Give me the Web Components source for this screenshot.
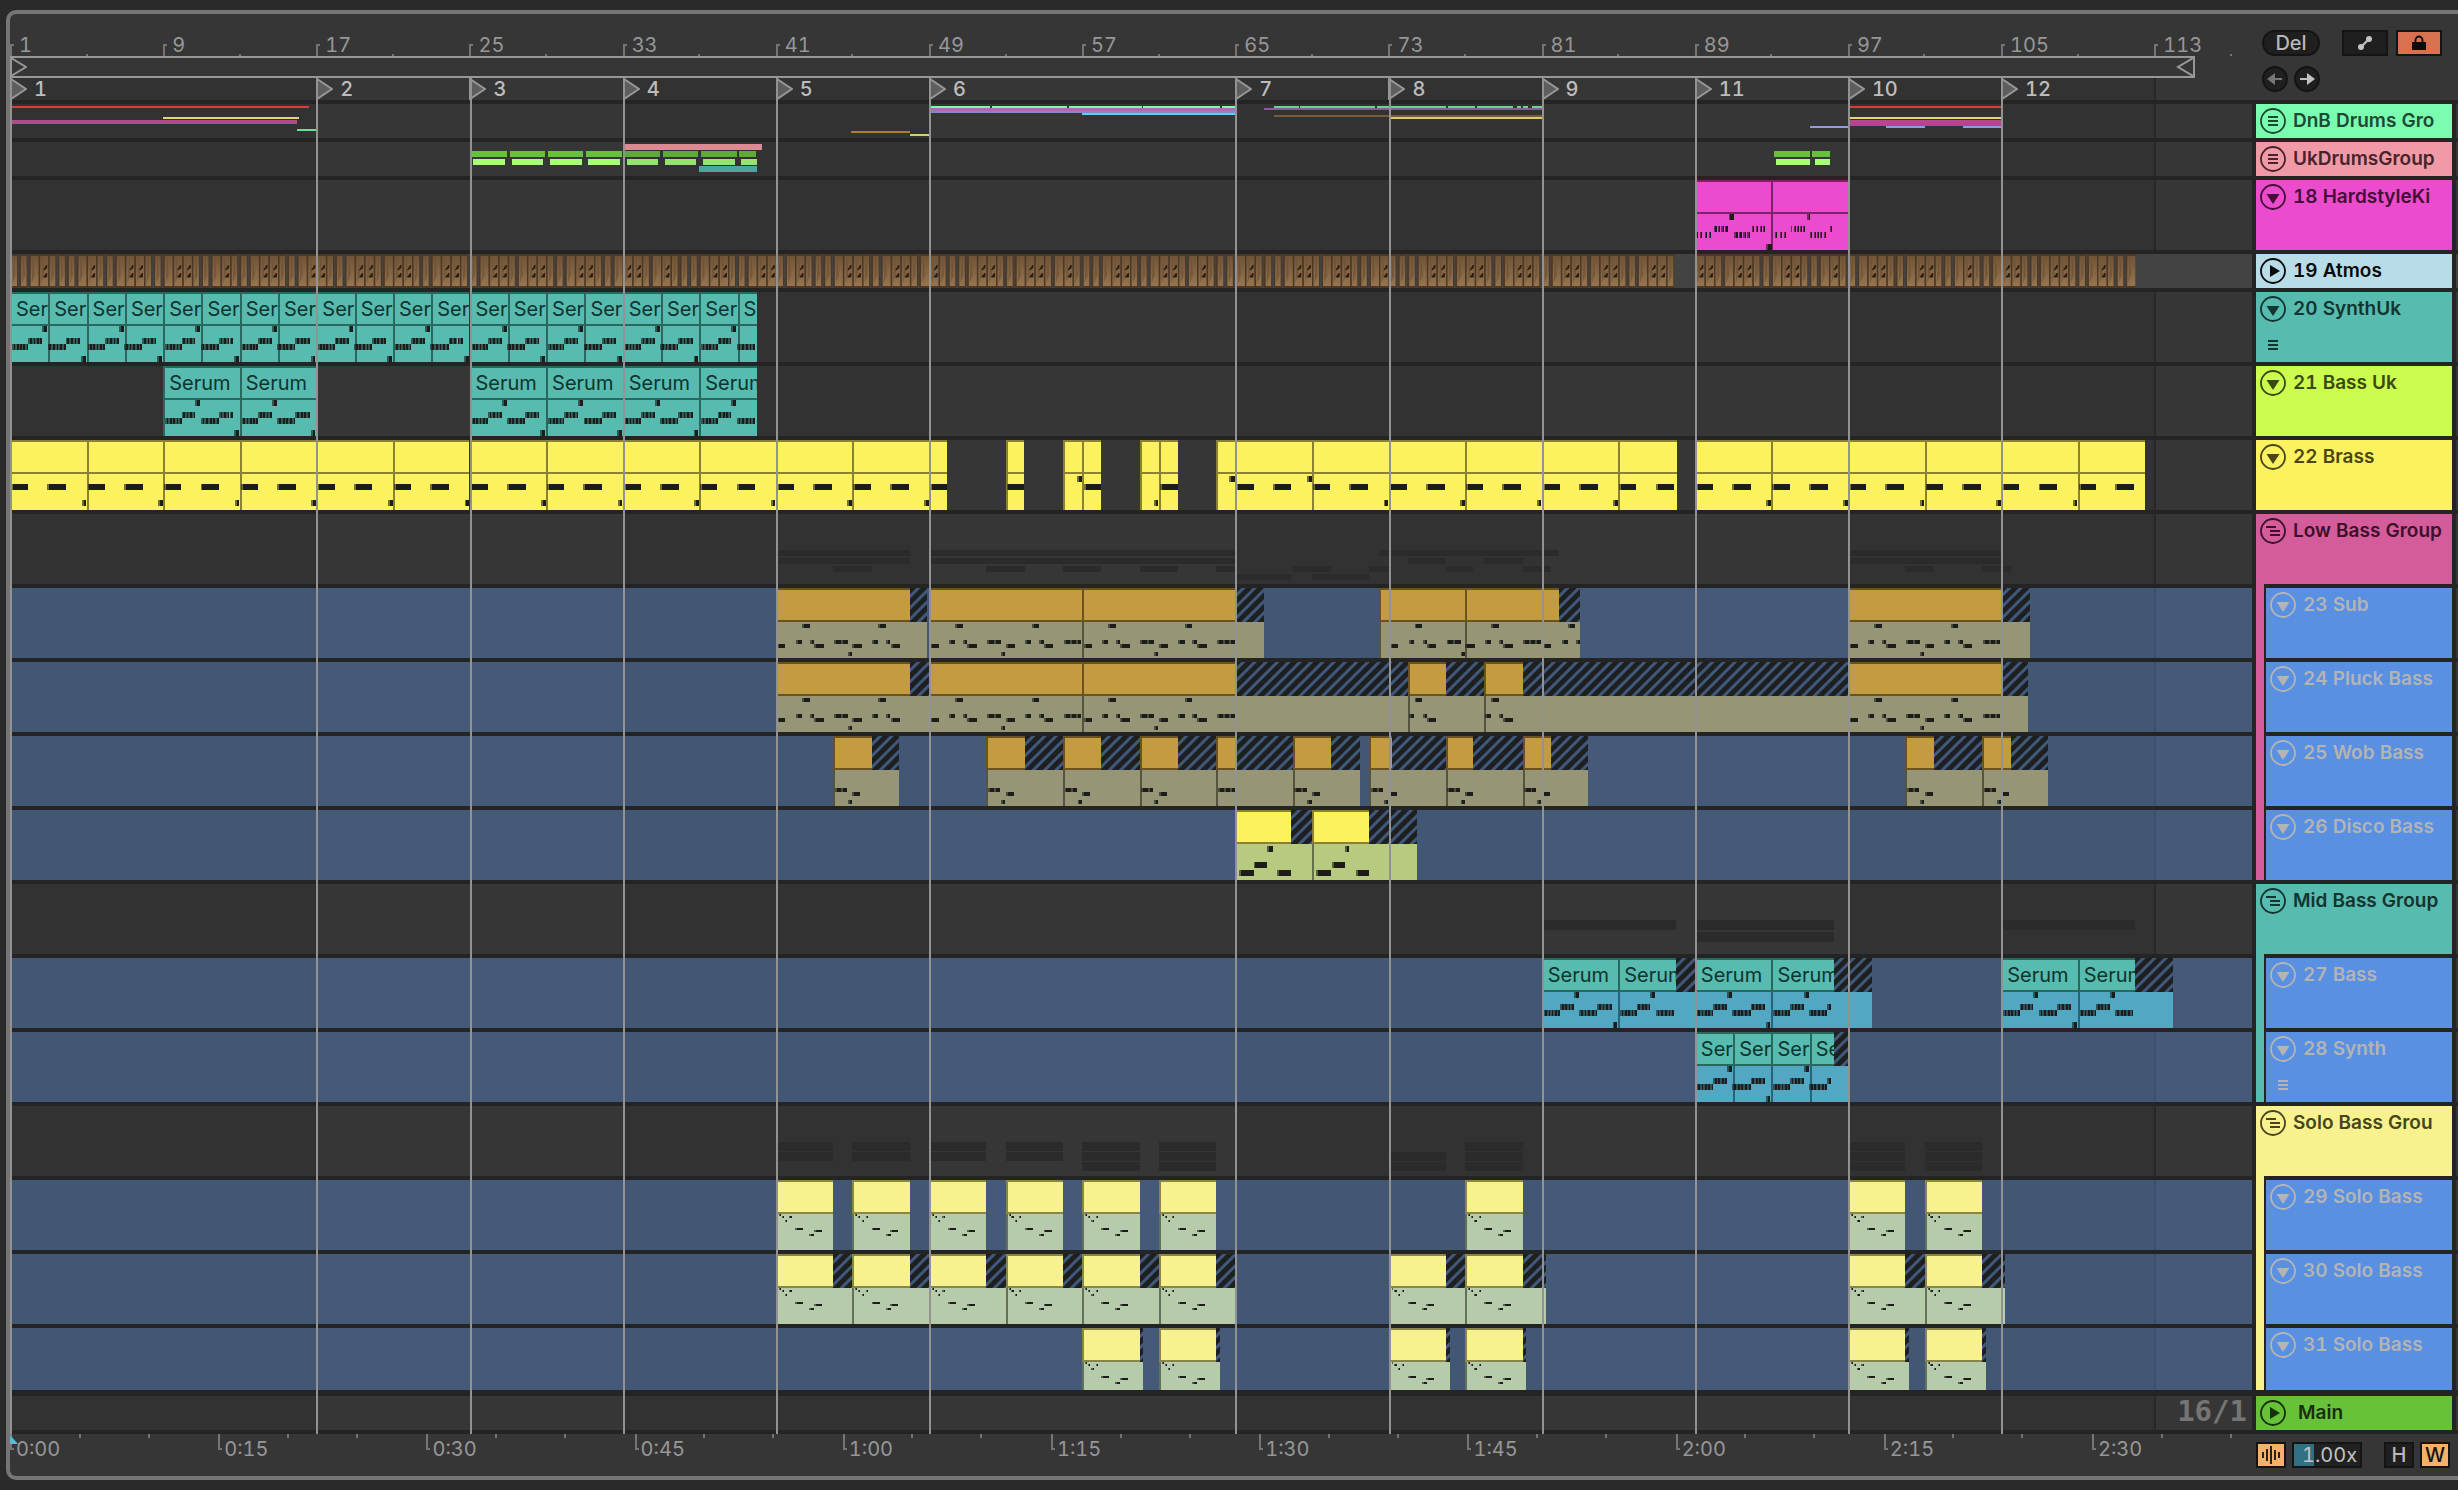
<!DOCTYPE html>
<html lang="en">
<head>
<meta charset="utf-8">
<title>Arrangement</title>
<style>
html, body { margin: 0; background: #2a2a2a; }
body {
  min-height: 100vh;
  font: 500 20px/26px Inter, "Open Sans", sans-serif;
  font-variant-numeric: tabular-nums;
  color: #979797;
  overflow-x: hidden;
}
</style>
</head>
<body>
<daw-arrangement></daw-arrangement>

<script>
const BARS = 117.1;
const pct = bars => (bars / BARS * 100).toFixed(4) + '%';

/* ---------- palette ---------- */
const TEAL = { c: '#57bbb0', b: '#28685f', body: '#57bbb0', bb: '#28685f', ink: '#10332e' };
const TEALBLUE = { c: '#57bbb0', b: '#28685f', body: '#52a8c2', bb: '#286478', ink: '#10332e' };
const YELLOW = { c: '#fcf15f', b: '#8a8232', body: '#fcf15f', bb: '#8a8232' };
const LIME = { c: '#fcf15f', b: '#8a8232', body: '#b8ca80', bb: '#667048' };
const ORANGE = { c: '#c39b41', b: '#6b5220', body: '#969575', bb: '#545441' };
const CREAM = { c: '#f7f28d', b: '#8a864a', body: '#b5cbaa', bb: '#62705c' };
const PINK = { c: '#eb4bcd', b: '#7d236b', body: '#eb4bcd', bb: '#7d236b' };

/* ---------- note helpers: [bar, length, y, height] ---------- */
const run = (bar, len, y, n, fill = 1) =>
  Array.from({ length: n }, (_, i) => [bar + i * len / n, len / n * fill, y, 6]);

function serumNotes(start, end) {
  const out = [];
  for (let b = start; b < end; b += 4) {
    out.push(...run(b + .1, .86, 52, 5), ...run(b + .96, .72, 46, 4), [b + 1.68, .26, 34, 6],
             ...run(b + 1.96, .95, 52, 5), ...run(b + 2.91, .74, 46, 4), [b + 3.7, .25, 64, 6]);
  }
  return out.filter(n => n[0] + n[1] <= end + .02);
}
function brassNotes(start, end, topEnd) {
  const out = [];
  for (let b = start; b < end; b += 4)
    out.push([b + .05, .9, 44, 6], [b + 1.95, .98, 44, 6],
             [b + 3.74, .24, topEnd && b === start ? 36 : 60, 6]);
  return out.filter(n => n[0] + n[1] <= end + .02);
}
function bassNotes(anchor, from, to) {
  const p = [
    [1.36, .4, 36], [5.36, .4, 36],
    [1.05, .3, 52], [1.78, .22, 52], [3.03, .36, 52], [3.39, .37, 52], [5.03, .32, 52], [5.76, .22, 52],
    [7.03, .33, 52], [7.36, .3, 52], [7.66, .3, 52],
    [.08, .42, 56], [2, .5, 56], [4, .5, 56], [6, .5, 56],
    [3.76, .22, 64]
  ];
  const out = [];
  for (let b = anchor; b < to; b += 8) p.forEach(n => out.push([b + n[0], n[1], n[2], 4]));
  return out.filter(n => n[0] >= from && n[0] + n[1] <= to + .02);
}
const wobNotes = (b, len) => [[b + .08, .34, 52, 4], [b + .42, .3, 52, 4]]
  .concat(len > 1 ? [[b + 1, .42, 56, 4], [b + .76, .22, 64, 4]] : [[b + .72, .25, 52, 4]]);
const soloNotes = b => [[b + .16, .1, 34, 2], [b + .3, .12, 36, 2], [b + .48, .12, 40, 2], [b + .7, .12, 36, 2],
  [b + 1, .42, 48, 2], [b + 1.98, .42, 50, 2], [b + 1.74, .26, 54, 2]];

const seq = (from, to, step) => { const a = []; for (let b = from; b < to; b += step) a.push(b); return a; };
const chain = (starts, end) => starts.map((s, i) => [s, i + 1 < starts.length ? starts[i + 1] : end]);

/* ---------- overview strips: [from, to, y, height, colour] ---------- */
const dnb = [
  [1, 16.6, 2, 2, '#cf4238'], [1, 16, 16, 4, '#b04a8c'], [9, 16.1, 13, 2, '#e2d478'], [16, 17, 25, 2, '#68e096'],
  [44.9, 48, 27, 2, '#a8812f'], [48, 49, 30, 2, '#d5cf70'],
  [49, 52.2, 2, 2, '#7afdb0'], [52.3, 56.2, 2, 2, '#7afdb0'], [56.3, 60.1, 2, 2, '#7afdb0'], [60.2, 64.2, 2, 2, '#7afdb0'], [64.3, 65, 2, 2, '#7afdb0'],
  [49, 65, 4, 3, '#a86bb8'], [49, 65, 7, 2, '#7f8bd0'], [57, 65, 9, 2, '#55d4f5'],
  [67, 68.3, 2, 2, '#68d597'], [68.4, 72.3, 2, 2, '#68d597'], [72.4, 76, 2, 2, '#68d597'], [76.1, 77.5, 2, 2, '#68d597'], [77.6, 79.5, 2, 2, '#68d597'], [79.7, 79.9, 2, 2, '#68d597'], [80, 80.3, 2, 2, '#68d597'], [80.5, 81, 2, 2, '#68d597'],
  [66.5, 81, 4, 2, '#8c5a9c'], [67, 81, 11, 2, '#7a5a3c'], [73, 81, 13, 2, '#d8cc72'],
  [95, 97, 22, 2, '#8f9ae0'], [97, 105, 2, 2, '#cf4238'], [97, 105, 13, 2, '#e2d478'], [97, 105, 16, 4, '#b04a8c'],
  [97, 105, 20, 2, '#b83f9c'], [99, 101, 22, 2, '#8f9ae0'], [103, 105, 22, 2, '#8f9ae0']
];
const uk = [[33, 40.3, 2, 6, '#dc8a96'], [37, 40, 24, 6, '#4ca89e']];
for (let b = 25; b < 40; b += 2) {
  const e = Math.min(b + 2, 40), dim = b > 32;
  uk.push([b + .1, e - .05, 9, 6, dim ? '#5cab33' : '#66c339'], [b + .2, e - (e < 40 ? .15 : 0), 17, 6, dim ? '#94e470' : '#a6fe7c']);
}
uk.push([93.15, 95, 9, 6, '#66c339'], [95.1, 96.05, 9, 6, '#66c339'], [93.25, 95, 17, 6, '#a6fe7c'], [95.25, 96.05, 17, 6, '#a6fe7c']);

const ghost = (rows, y0, step, h) => rows.flatMap((r, i) => r.map(([a, b]) => [a, b, y0 + i * step, h, '#2b2b2b']));
const solo29 = [41, 45, 49, 53, 57, 61, 77, 97, 101], solo30 = [41, 45, 49, 53, 57, 61, 73, 77, 97, 101], solo31 = [57, 61, 73, 77, 97, 101];
const tri = a => a.map(b => [b, b + 3]);

/* ---------- tracks ---------- */
const subClips = [[41, 48, 48.9], [49, 57], [57, 65, 66.5], [72.5, 77], [77, 81.9, 83], [97, 105, 106.5]];
const pluckClips = [[41, 48, 49], [49, 57], [57, 65, 74], [74, 76, 78], [78, 80, 97], [97, 105, 106.4]];
const wobClips = [[44, 46, 47.45], [52, 54, 56], [56, 58, 60], [60, 62, 64], [64, 65, 68], [68, 70, 71.5],
  [72, 73.2, 76], [76, 77.4, 80], [80, 81.5, 83.4], [100, 101.5, 104], [104, 105.5, 107.45]];
const main8 = [...bassNotes(41, 41, 48), ...bassNotes(49, 49, 65), ...bassNotes(97, 97, 105)];

const TRACKS = [
  { name: 'DnB Drums Gro', h: 34, color: '#7bfdaf', ink: '#1b4a33', icon: 'bars', strips: dnb },
  { name: 'UkDrumsGroup', h: 34, color: '#f09aa7', ink: '#472429', icon: 'bars', strips: uk },
  { name: '18 HardstyleKi', h: 70, color: '#eb4bcd', ink: '#430f38', icon: 'down', skin: PINK, clips: chain([89, 93], 97),
    notes: [...run(89.06, .9, 52, 4, .5), ...run(90, .78, 46, 4, .7), [90.76, .3, 34, 6], ...run(91.06, .9, 52, 4, .75), ...run(92, .78, 46, 4, .5), [92.74, .3, 64, 6],
            ...run(93.2, .7, 52, 3, .45), ...run(94, .82, 46, 5, .6), [94.84, .2, 34, 6], ...run(95.04, .86, 52, 5, .6), [96.06, .1, 46, 6]] },
  { name: '19 Atmos', h: 34, color: '#b8dce8', ink: '#0a0a0a', icon: 'right', atmos: true },
  { name: '20 SynthUk', h: 70, color: '#57bbb0', ink: '#12352f', icon: 'down', menu: true, skin: TEAL,
    clips: chain(seq(1, 40, 2), 40).map(([a, b]) => [a, b, b, b - a > 1 ? 'Ser' : 'S']), notes: serumNotes(1, 40) },
  { name: '21 Bass Uk', h: 70, color: '#ccfc4e', ink: '#3a4911', icon: 'down', skin: TEAL, title: 'Serum',
    clips: [...chain([9, 13], 17), ...chain([25, 29, 33, 37], 40)], notes: [...serumNotes(9, 17), ...serumNotes(25, 40)] },
  { name: '22 Brass', h: 70, color: '#fcf15f', ink: '#4a4616', icon: 'down', skin: YELLOW,
    clips: [...chain(seq(1, 50, 4), 49.95), [53, 53.95], [56, 57], [57, 58], [60, 61], [61, 62], [64, 65],
            ...chain(seq(65, 88, 4), 88.05), ...chain(seq(89, 112, 4), 112.5)],
    notes: [...brassNotes(1, 49.95), ...brassNotes(53, 53.95), [56.75, .22, 36, 6], [57.08, .9, 44, 6], [60.74, .22, 60, 6], [61.08, .9, 44, 6],
            [64.66, .3, 36, 6], ...brassNotes(65, 88.1, true), ...brassNotes(89, 112.5)] },
  { name: 'Low Bass Group', h: 70, color: '#d45c9b', ink: '#3a1229', icon: 'group',
    strips: ghost([[[41, 48], [49, 65], [72.5, 81.9], [97, 105]], [[41, 48], [49, 65], [74, 76], [78, 80], [97, 105]],
      [[44, 46], [52, 54], [56, 58], [60, 62], [64, 65], [68, 70], [72, 73.2], [76, 77.4], [80, 81.5], [100, 101.5], [104, 105.5]],
      [[65, 67.9], [69, 72]]], 36, 8, 6) },
  { name: '23 Sub', h: 70, sub: '#d45c9b', skin: ORANGE, clips: subClips, notes: [...main8, ...bassNotes(73, 73, 83)] },
  { name: '24 Pluck Bass', h: 70, sub: '#d45c9b', skin: ORANGE, clips: pluckClips,
    notes: [...main8, ...bassNotes(73, 74, 75.6), ...bassNotes(73, 78, 79.6)] },
  { name: '25 Wob Bass', h: 70, sub: '#d45c9b', skin: ORANGE, clips: wobClips, notes: wobClips.flatMap(c => wobNotes(c[0], c[1] - c[0])) },
  { name: '26 Disco Bass', h: 70, sub: '#d45c9b', skin: LIME, clips: [[65, 67.9, 69], [69, 72, 74.5]],
    notes: [[66.65, .3, 36, 6], [70.75, .2, 36, 6], [65.95, .7, 52, 6], [70.05, .7, 52, 6], [65.2, .75, 60, 6], [67.2, .7, 60, 6], [69.2, .8, 60, 6], [71.3, .7, 60, 6]] },
  { name: 'Mid Bass Group', h: 70, color: '#57bbb0', ink: '#12352f', icon: 'group',
    strips: ghost([[[81, 88], [89, 96.25], [105, 112]], [[89, 96.25]]], 36, 12, 10) },
  { name: '27 Bass', h: 70, sub: '#57bbb0', skin: TEALBLUE, title: 'Serum',
    clips: [[81, 85], [85, 88, 89], [89, 93], [93, 96.25, 98.25], [105, 109], [109, 112, 114]],
    notes: [...serumNotes(81, 88), ...serumNotes(89, 96.1), ...serumNotes(105, 112)] },
  { name: '28 Synth', h: 70, sub: '#57bbb0', menu: true, skin: TEALBLUE,
    clips: [[89, 91, 91, 'Ser'], [91, 93, 93, 'Ser'], [93, 95, 95, 'Ser'], [95, 96.25, 97, 'Se']], notes: serumNotes(89, 96.1) },
  { name: 'Solo Bass Grou', h: 70, color: '#f7f28d', ink: '#47441f', icon: 'group', strips: ghost([tri(solo29), tri(solo30), tri(solo31)], 36, 10, 9) },
  { name: '29 Solo Bass', h: 70, sub: '#f7f28d', skin: CREAM, clips: tri(solo29), notes: solo29.flatMap(soloNotes) },
  { name: '30 Solo Bass', h: 70, sub: '#f7f28d', skin: CREAM, clips: solo30.map(b => [b, b + 3, b + 4 + (b === 77 || b === 101 ? .2 : 0)]), notes: solo30.flatMap(soloNotes) },
  { name: '31 Solo Bass', h: 62, sub: '#f7f28d', skin: CREAM, clips: solo31.map(b => [b, b + 3, b + 3.2]), notes: solo31.flatMap(soloNotes) },
  { name: 'Main', h: 34, color: '#67c239', ink: '#15300a', icon: 'right', main: true }
];

/* ---------- base ---------- */
class Base extends HTMLElement {
  connectedCallback() {
    if (this.shadowRoot) return;
    this.attachShadow({ mode: 'open' }).innerHTML = '<style>*{box-sizing:border-box}' + this.css() + '</style>' + this.html();
  }
  css() { return ':host{display:block}'; }
  html() { return '<slot></slot>'; }
}

/* ---------- round fold icons ---------- */
const GLYPHS = {
  bars: '<path d="M8 9h10M8 13h10M8 17h10" stroke="currentColor" stroke-width="2"/>',
  group: '<path d="M6 9h10M10 13h10M10 17h10" stroke="currentColor" stroke-width="2"/>',
  down: '<path d="M6.5 10h13L13 20z" fill="currentColor"/>',
  right: '<path d="M10 7v12L20 13z" fill="currentColor"/>'
};
class FoldIcon extends Base {
  css() { return ':host{display:block;width:26px;height:26px}svg{display:block}'; }
  html() {
    return `<svg width="26" height="26" viewBox="0 0 26 26" fill="none" aria-hidden="true">
      <circle cx="13" cy="13" r="12" stroke="currentColor" stroke-width="1.8"/>${GLYPHS[this.getAttribute('kind')]}</svg>`;
  }
}
customElements.define('fold-icon', FoldIcon);

/* ---------- generic control button ---------- */
class DawButton extends Base {
  css() {
    return `:host{display:block}
    button{display:flex;align-items:center;justify-content:center;width:var(--w,46px);height:26px;padding:0;margin:0;
      border:2px solid #141414;border-radius:var(--r,0);background:var(--bg,#1f1f1f);color:var(--fg,#b8b8b8);font:inherit;line-height:20px}
    ::slotted(svg){display:block}`;
  }
  html() { return `<button type="button" aria-label="${this.getAttribute('label')}"><slot></slot></button>`; }
}
customElements.define('daw-button', DawButton);

/* ---------- bar ruler ---------- */
class BarRuler extends Base {
  css() {
    return `:host{display:flex;height:42px;overflow:hidden}
    div{flex:0 0 ${pct(8)};height:42px;padding:18px 0 0 9px;line-height:26px;color:#979797;white-space:nowrap;font-weight:400;
      background:linear-gradient(#757575,#757575) 0 30px/2px 12px no-repeat,
                 linear-gradient(#757575,#757575) 0 30px/4px 2px no-repeat,
                 linear-gradient(#757575,#757575) 50% 40px/2px 2px no-repeat}
    div:last-child{flex:0 0 ${pct(8)}}`;
  }
  html() { return seq(1, 114, 8).map(b => `<div>${b}</div>`).join(''); }
}
customElements.define('bar-ruler', BarRuler);

/* ---------- loop brace ---------- */
class LoopBrace extends Base {
  css() {
    return `:host{display:block;height:22px}
    div{display:flex;justify-content:space-between;width:${pct(114.1)};height:22px;border:2px solid #979797;border-left:0}
    svg{display:block}`;
  }
  html() {
    const arrow = d => `<svg width="17" height="18" viewBox="0 0 17 18" fill="none" stroke="#979797" stroke-width="2"><path d="${d}"/></svg>`;
    return `<div>${arrow('M1 0v18L16 9z')}${arrow('M17 0L2 9l15 9')}</div>`;
  }
}
customElements.define('loop-brace', LoopBrace);

/* ---------- locators ---------- */
const LOCATORS = [[1, '1'], [17, '2'], [25, '3'], [33, '4'], [41, '5'], [49, '6'], [65, '7'], [73, '8'], [81, '9'], [89, '11'], [97, '10'], [105, '12']];

/* Alternating 16-bar shading, with a grid line at the last boundary. */
const shade = (a, b, line) => {
  const s = [];
  for (let i = 0; i < 8; i++) {
    const x0 = pct(i * 16), x1 = i === 7 ? '100%' : pct((i + 1) * 16);
    const col = i % 2 ? b : a;
    s.push(i === 7 ? `${line} ${x0},${line} calc(${x0} + 2px),${col} calc(${x0} + 2px),${col} ${x1}` : `${col} ${x0},${col} ${x1}`);
  }
  return `linear-gradient(90deg,${s.join(',')})`;
};
class LocatorBar extends Base {
  css() {
    return `:host{display:flex;height:22px;background:${shade('#323232', '#363636', '#282828')}}
    div{display:flex;align-items:center;gap:7px;min-width:0;color:#bdbdbd}
    svg{display:block;flex:none}`;
  }
  html() {
    return LOCATORS.map(([b, t], i) => {
      const next = i + 1 < LOCATORS.length ? LOCATORS[i + 1][0] : 1 + BARS;
      return `<div style="flex:0 0 ${pct(next - b)}"><svg width="17" height="22" viewBox="0 0 17 22"><path d="M1 1v20L16 11z" fill="#5e5e5e" stroke="#979797" stroke-width="2"/></svg><span>${t}</span></div>`;
    }).join('');
  }
}
customElements.define('locator-bar', LocatorBar);

/* ---------- a clip on a lane ---------- */
class DawClip extends Base {
  css() {
    return `:host{position:absolute;top:0;bottom:0;display:grid;grid-template:34px 1fr / var(--head) 1fr;overflow:hidden}
    .head{border:2px solid var(--b);border-right:0;background:var(--c);color:var(--ink,#222);padding-left:4px;font-weight:400;
      line-height:30px;white-space:nowrap;overflow:hidden}
    .tail{background:repeating-linear-gradient(135deg,#1e1f21 0 4px,#40597b 5px 7px,#1e1f21 8px)}
    .body{grid-column:1/3;background:var(--body);border-left:2px solid var(--bb)}`;
  }
  html() { return `<div class="head">${this.getAttribute('name') || ''}</div><div class="tail"></div><div class="body"></div>`; }
}
customElements.define('daw-clip', DawClip);

/* ---------- sliced audio waveform ---------- */
function atmosSvg() {
  const single = new Set([0, 1, 4, 14, 17, 20, 23, 26, 27, 30, 40, 43, 46]);
  const speck = new Set();
  for (let k = 0; k < 48; k++) {
    const i = Math.floor(3.34 + k * 14 / 3);
    speck.add(i);
    if (!single.has(k)) speck.add(i + 1);
  }
  let s = '';
  const half = 9.5735;
  for (let i = 0; i < 222; i++) {
    if (i === 174 || i === 175) continue;
    const x = i * half, wide = speck.has(i) || speck.has(i + 1), w = wide ? half : 8;
    s += `<rect x="${x.toFixed(2)}" width="${w}" height="34" fill="#4c3826"/><rect x="${(x + 1.5).toFixed(2)}" y="2" width="${w - (wide ? 1.5 : 2.5)}" height="30" fill="url(#w)"/>`;
    s += `<path d="M${(x + 4).toFixed(1)} 3l1.5 18-3 8z" fill="#5f472f" opacity=".5"/>`;
    if (speck.has(i)) s += `<path d="M${(x + 5).toFixed(1)} 16l3-5v3zM${(x + 5).toFixed(1)} 23l3-4v4z" stroke="#2a1d12" fill="#2a1d12"/>`;
  }
  return `<svg class="notes" viewBox="0 0 2242 34" preserveAspectRatio="none" style="height:34px">
    <defs><linearGradient id="w" x1="0" y1="0" x2="0" y2="1"><stop offset="0" stop-color="#705437"/><stop offset="1" stop-color="#96744e"/></linearGradient></defs>${s}
    <rect width="2" height="34" fill="#c4f1f8"/></svg>`;
}

/* ---------- a lane ---------- */
class DawLane extends Base {
  css() {
    const t = this.track;
    const bg = t.sub ? shade('#415774', '#455a78', '#3b506f') : t.atmos ? '#434343' : shade('#323232', '#363636', '#282828');
    return `:host{display:block;position:relative;flex:1 1 0;min-width:0;height:${t.h}px;overflow:hidden;background:${bg}}
    .notes{position:absolute;left:0;top:0;width:100%;height:70px;display:block}
    .pos{display:flex;justify-content:flex-end;height:34px;padding-right:5px;
      font:700 29px/30px "DejaVu Sans Mono","Liberation Mono",monospace;color:#757575}`;
  }
  html() {
    const t = this.track, s = t.skin;
    if (t.atmos) return atmosSvg();
    if (t.main) return '<div class="pos">16/1</div>';
    let out = '';
    (t.clips || []).forEach(([a, b, tail = b, title = t.title || '']) => {
      out += `<daw-clip name="${title}" style="left:${pct(a - 1)};width:${pct(tail - a)};--head:${((b - a) / (tail - a) * 100).toFixed(3)}%;
        --c:${s.c};--b:${s.b};--body:${s.body};--bb:${s.bb};--ink:${s.ink || '#222'}"></daw-clip>`;
    });
    const r = (x, y, w, h, f, o = 1) => `<rect x="${(x - 1).toFixed(3)}" y="${y}" width="${w.toFixed(3)}" height="${h}" fill="${f}" opacity="${o}"/>`;
    let marks = (t.strips || []).map(([a, b, y, h, f]) => r(a, y, b - a, h, f)).join('');
    (t.notes || []).forEach(([x, w, y, h]) => {
      const lead = Math.min(.1, w / 2);
      marks += r(x, y, lead, h, '#1a1a1a', .6) + r(x + lead, y, w - lead, h, '#1c1c1a');
    });
    return out + `<svg class="notes" viewBox="0 0 ${BARS} 70" preserveAspectRatio="none" shape-rendering="crispEdges" aria-hidden="true">${marks}</svg>`;
  }
}
customElements.define('daw-lane', DawLane);

/* ---------- track header ---------- */
class TrackHead extends Base {
  css() {
    const t = this.track;
    return `:host{display:flex;flex:0 0 196px;height:${t.h}px;gap:2px;color:${t.sub ? '#b4b4b4' : t.ink}}
    .stripe{flex:0 0 8px;margin-top:-4px;background:${t.sub}}
    .box{flex:1 1 0;min-width:0;display:flex;flex-direction:column;gap:15px;padding:4px 0 0 4px;background:${t.sub ? '#5990e2' : t.color};overflow:hidden}
    .row{display:flex;align-items:center;gap:${t.main ? 12 : 7}px;height:26px;white-space:nowrap}
    button{display:block;padding:0;border:0;background:none;color:inherit}
    .menu{display:block;margin-left:8px}
    .row span{font-weight:600;font-size:19px}`;
  }
  html() {
    const t = this.track;
    return (t.sub ? '<div class="stripe"></div>' : '') +
      `<div class="box"><div class="row"><button type="button" aria-label="Fold ${t.name}"><fold-icon kind="${t.sub ? 'down' : t.icon}"></fold-icon></button><span>${t.name}</span></div>` +
      (t.menu ? '<svg class="menu" width="10" height="18" viewBox="0 0 10 18" stroke="currentColor" stroke-width="2"><path d="M0 4h10M0 8h10M0 12h10"/></svg>' : '') + '</div>';
  }
}
customElements.define('track-head', TrackHead);

/* ---------- one track row ---------- */
class DawTrack extends Base {
  css() {
    return `:host{display:flex;gap:4px;background:#242424}
    .edge{flex:0 0 2px;background:${this.track.atmos ? '#434343' : '#363636'}}`;
  }
  html() { return '<div class="edge"></div>'; }
  connectedCallback() {
    super.connectedCallback();
    const edge = this.shadowRoot.querySelector('.edge');
    const lane = document.createElement('daw-lane'), head = document.createElement('track-head');
    lane.track = head.track = this.track;
    edge.before(lane, head);
  }
}
customElements.define('daw-track', DawTrack);

/* ---------- time ruler ---------- */
class TimeRuler extends Base {
  css() {
    return `:host{display:flex;flex:1 1 0;min-width:0;height:42px;overflow:hidden;position:relative}
    div{flex:0 0 ${pct(10.875)};height:42px;padding:2px 0 0 6px;line-height:26px;font-weight:400;color:#979797;
      background:linear-gradient(#757575,#757575) 0 0/2px 16px no-repeat,
                 linear-gradient(#757575,#757575) 0 14px/4px 2px no-repeat,
                 linear-gradient(#757575,#757575) 33.3% 0/2px 4px no-repeat,
                 linear-gradient(#757575,#757575) 66.7% 0/2px 4px no-repeat}
    svg{position:absolute;left:0;top:0}`;
  }
  html() {
    return ['0:00', '0:15', '0:30', '0:45', '1:00', '1:15', '1:30', '1:45', '2:00', '2:15', '2:30'].map(t => `<div>${t}</div>`).join('') +
      '<svg width="8" height="10" viewBox="0 0 8 10" aria-hidden="true"><path d="M0 1l8 9H0z" fill="#4fbfd8"/></svg>';
  }
}
customElements.define('time-ruler', TimeRuler);

/* ---------- whole view ---------- */
class DawArrangement extends Base {
  css() {
    return `:host{display:block;padding:10px 0 10px 6px}
    main{border:4px solid #757575;border-right:0;border-radius:10px 0 0 10px;background:#363636;overflow:hidden}
    header,footer{display:flex}
    .scale{flex:1 1 0;min-width:0}
    .tools{flex:0 0 206px;display:flex;flex-direction:column;gap:10px;padding:16px 16px 0 10px}
    .set{display:flex;gap:8px}
    .set.near{gap:6px}
    .auto{margin-left:auto}
    .pill{--w:58px;--r:13px}
    .round{--w:26px;--r:13px}
    .rows{position:relative;display:flex;flex-direction:column;gap:4px;padding:4px 0;background:#242424}
    .last{padding-top:2px}
    .lines{position:absolute;left:0;right:206px;top:-22px;bottom:0;pointer-events:none}
    .lines i{position:absolute;top:0;bottom:0;width:2px;background:#929292}
    .tools.low{flex-direction:row;gap:6px;padding:8px 8px 0 4px}
    input{width:70px;height:26px;margin:0;padding:0 2px 0 8px;border:2px solid #141414;border-radius:0;color:#c2c2c2;font:inherit;font-weight:400;
      background:linear-gradient(90deg,#317082 20px,#212121 20px)}
    .gap{margin-left:16px}
    .small{--w:30px}`;
  }
  html() {
    return `<main>
      <header>
        <div class="scale"><bar-ruler></bar-ruler><loop-brace></loop-brace><locator-bar></locator-bar></div>
        <div class="tools">
          <div class="set">
            <daw-button class="pill" label="Delete locator">Del</daw-button>
            <daw-button class="auto" label="Automation mode"><svg width="16" height="16" viewBox="0 0 16 16"><path d="M4 12L12 4" stroke="#c2c2c2" stroke-width="2.2"/><circle cx="4" cy="12" r="3" fill="#c2c2c2"/><circle cx="12" cy="4" r="3" fill="#c2c2c2"/></svg></daw-button>
            <daw-button label="Lock envelopes" style="--bg:#d8724e"><svg width="14" height="16" viewBox="0 0 14 16"><path d="M3.5 8V5a3.500 3.500 0 0 1 7 0v3" fill="none" stroke="#0d0d0d" stroke-width="1.8"/><rect y="7" width="14" height="8" fill="#0d0d0d"/></svg></daw-button>
          </div>
          <div class="set near">
            <daw-button class="round" label="Previous locator"><svg width="16" height="14" viewBox="0 0 16 14"><path d="M0 7l8-6v5h7v2H8v5z" fill="#757575"/></svg></daw-button>
            <daw-button class="round" label="Next locator"><svg width="16" height="14" viewBox="0 0 16 14"><path d="M16 7L8 1v5H1v2h7v5z" fill="#c2c2c2"/></svg></daw-button>
          </div>
        </div>
      </header>
      <section class="rows"></section>
      <footer>
        <time-ruler></time-ruler>
        <div class="tools low">
          <daw-button class="small" label="Waveform zoom" style="--bg:#f5b168"><svg width="20" height="18" viewBox="0 0 20 18" stroke="#141414" stroke-width="1.8"><path d="M2 6v6M6 3v12M10 0v18M14 4v10M18 6v6"/></svg></daw-button>
          <input type="text" value="1.00x" aria-label="Zoom factor">
          <daw-button class="small gap" label="Fit height">H</daw-button>
          <daw-button class="small" label="Fit width" style="--bg:#f5b168;--fg:#141414">W</daw-button>
        </div>
      </footer>
    </main>`;
  }
  connectedCallback() {
    super.connectedCallback();
    const rows = this.shadowRoot.querySelector('.rows');
    TRACKS.forEach(t => {
      const el = document.createElement('daw-track');
      el.track = t;
      if (t.main) el.className = 'last';
      rows.append(el);
    });
    const lines = document.createElement('div');
    lines.className = 'lines';
    lines.innerHTML = LOCATORS.map(([b]) => `<i style="left:${pct(b - 1)}"></i>`).join('');
    rows.append(lines);
  }
}
customElements.define('daw-arrangement', DawArrangement);
</script>
</body>
</html>
